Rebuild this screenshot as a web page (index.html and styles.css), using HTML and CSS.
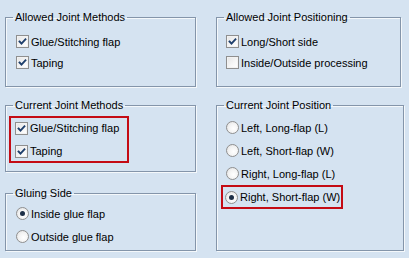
FILE: index.html
```html
<!DOCTYPE html>
<html>
<head>
<meta charset="utf-8">
<link rel="stylesheet" href="styles.css">
</head>
<body>
<div class="panel">
  <div class="col col-left">
    <fieldset class="group g-allowed">
      <legend>Allowed Joint Methods</legend>
      <div class="rows tight">
        <div class="row"><span class="cb checked"><svg viewBox="0 0 13 13"><path d="M3 6.5 L5.3 9 L10 3.8" /></svg></span><span class="lbl">Glue/Stitching flap</span></div>
        <div class="row"><span class="cb checked"><svg viewBox="0 0 13 13"><path d="M3 6.5 L5.3 9 L10 3.8" /></svg></span><span class="lbl">Taping</span></div>
      </div>
    </fieldset>
    <fieldset class="group g-current">
      <legend>Current Joint Methods</legend>
      <div class="hl hl-methods">
        <div class="row r20"><span class="cb checked"><svg viewBox="0 0 13 13"><path d="M3 6.5 L5.3 9 L10 3.8" /></svg></span><span class="lbl">Glue/Stitching flap</span></div>
        <div class="row r20"><span class="cb checked"><svg viewBox="0 0 13 13"><path d="M3 6.5 L5.3 9 L10 3.8" /></svg></span><span class="lbl">Taping</span></div>
      </div>
    </fieldset>
    <fieldset class="group g-gluing">
      <legend>Gluing Side</legend>
      <div class="rows">
        <div class="row"><span class="rb on"></span><span class="lbl">Inside glue flap</span></div>
        <div class="row"><span class="rb"></span><span class="lbl">Outside glue flap</span></div>
      </div>
    </fieldset>
  </div>
  <div class="col col-right">
    <fieldset class="group g-pos">
      <legend>Allowed Joint Positioning</legend>
      <div class="rows tight right">
        <div class="row"><span class="cb checked"><svg viewBox="0 0 13 13"><path d="M3 6.5 L5.3 9 L10 3.8" /></svg></span><span class="lbl">Long/Short side</span></div>
        <div class="row"><span class="cb"></span><span class="lbl">Inside/Outside processing</span></div>
      </div>
    </fieldset>
    <fieldset class="group g-curpos">
      <legend>Current Joint Position</legend>
      <div class="rows right">
        <div class="row"><span class="rb"></span><span class="lbl">Left, Long-flap (L)</span></div>
        <div class="row"><span class="rb"></span><span class="lbl">Left, Short-flap (W)</span></div>
        <div class="row"><span class="rb"></span><span class="lbl">Right, Long-flap (L)</span></div>
        <div class="hl hl-pos">
          <div class="row r20"><span class="rb on"></span><span class="lbl">Right, Short-flap (W)</span></div>
        </div>
      </div>
    </fieldset>
  </div>
</div>
</body>
</html>
```

FILE: styles.css
```css
html, body {
  margin: 0;
  padding: 0;
  background: #d5e3f1;
}
body {
  font-family: "Liberation Sans", Arial, sans-serif;
  font-size: 11px;
  color: #000;
  width: 409px;
  height: 258px;
  overflow: hidden;
}
.panel {
  display: flex;
  padding: 11px 0 0 5px;
}
.col {
  display: flex;
  flex-direction: column;
}
.col-left {
  width: 191px;
}
.col-right {
  margin-left: 20px;
  width: 188px;
}
.group {
  margin: 0;
  min-width: 0;
  border: 1px solid #8495aa;
  box-shadow: inset 1px 1px 0 #f4f8fb, 1px 1px 0 #f4f8fb;
  padding: 0;
  box-sizing: border-box;
}
.group legend {
  padding: 0 2px;
  margin-left: 7px;
  line-height: 13px;
  height: 13px;
}
.rows {
  display: flex;
  flex-direction: column;
  padding-left: 10px;
}
.rows.right {
  padding-left: 9px;
}
.row {
  display: flex;
  align-items: center;
  height: 23px;
}
.rows.tight .row {
  height: 21px;
}
.row.r20 {
  height: 20px;
}
.lbl {
  margin-left: 2px;
  white-space: nowrap;
}
.g-allowed {
  height: 76px;
  padding-top: 7px;
}
.g-current {
  margin-top: 12px;
  height: 73px;
  padding-top: 4px;
}
.g-gluing {
  margin-top: 15px;
  height: 64px;
  padding-top: 2px;
}
.g-pos {
  width: 185px;
  height: 76px;
  padding-top: 7px;
}
.g-curpos {
  margin-top: 12px;
  height: 152px;
  padding-top: 4px;
}
.hl {
  border: 2px solid #c40b14;
}
.hl-methods {
  width: 120px;
  box-sizing: border-box;
  margin-left: 3px;
  padding-left: 4px;
  display: flex;
  flex-direction: column;
  gap: 3px;
}
.hl-pos {
  width: 122px;
  box-sizing: border-box;
  margin-left: -5px;
  padding-left: 2px;
}
.cb {
  width: 13px;
  height: 13px;
  box-sizing: border-box;
  border: 1px solid #8f8f8f;
  background: linear-gradient(135deg, #e4e4e4 0%, #f7f7f7 60%, #ffffff 100%);
  box-shadow: inset 0 0 0 1px #f2f2f2;
  flex: none;
  display: flex;
  align-items: center;
  justify-content: center;
}
.cb svg {
  width: 11px;
  height: 11px;
  display: block;
}
.cb path {
  fill: none;
  stroke: #1e3f6c;
  stroke-width: 2.2;
  stroke-linecap: square;
}
.cb:not(.checked) svg {
  display: none;
}
.rb {
  width: 13px;
  height: 13px;
  box-sizing: border-box;
  border: 1px solid #8f8f8f;
  border-radius: 50%;
  background: radial-gradient(circle at 60% 60%, #ffffff 0%, #f3f3f3 50%, #dcdcdc 100%);
  flex: none;
  display: flex;
  align-items: center;
  justify-content: center;
}
.rb.on::after {
  content: "";
  width: 5px;
  height: 5px;
  border-radius: 50%;
  background: #1d2f47;
}
```
